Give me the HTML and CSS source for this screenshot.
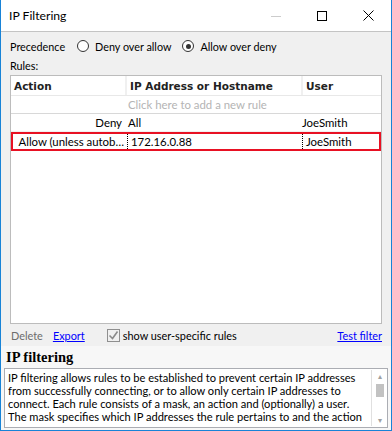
FILE: index.html
```html
<!DOCTYPE html>
<html lang="en">
<head>
  <meta charset="UTF-8" />
  <title>IP Filtering</title>
  <link rel="stylesheet" href="styles.css">
</head>
<body>
  <div class="window">
    <!-- Title bar -->
    <div class="titlebar">
      <span class="title">IP Filtering</span>
      <div class="controls">
        <span class="ctl"><svg width="10" height="10" viewBox="0 0 10 10"><path d="M0 5.5h10" stroke="#ccc" stroke-width="1"/></svg></span>
        <span class="ctl"><svg width="10" height="10" viewBox="0 0 10 10"><rect x="0.5" y="0.5" width="9" height="9" fill="none" stroke="#000"/></svg></span>
        <span class="ctl"><svg width="11" height="11" viewBox="0 0 11 11"><path d="M0.5 0.5l10 10M10.5 0.5l-10 10" stroke="#000" stroke-width="1"/></svg></span>
      </div>
    </div>

    <div class="body">
      <div class="precedence">
        <span>Precedence</span>
        <label class="radio"><span class="dot"></span>Deny over allow</label>
        <label class="radio checked"><span class="dot"></span>Allow over deny</label>
      </div>

      <div class="rules-label">Rules:</div>

      <div class="grid">
        <div class="row head">
          <div class="cell c1">Action</div>
          <div class="cell c2">IP Address or Hostname</div>
          <div class="cell c3">User</div>
        </div>
        <div class="row new">
          <div class="cell c1"></div>
          <div class="cell c2">Click here to add a new rule</div>
          <div class="cell c3"></div>
        </div>
        <div class="row">
          <div class="cell c1 right">Deny</div>
          <div class="cell c2">All</div>
          <div class="cell c3">JoeSmith</div>
        </div>
        <div class="row selected">
          <div class="cell c1 right">Allow (unless autob…</div>
          <div class="cell c2 focus">172.16.0.88</div>
          <div class="cell c3 focus">JoeSmith</div>
        </div>
      </div>

      <div class="actions">
        <span class="disabled">Delete</span>
        <a class="link" href="#">Export</a>
        <label class="check"><span class="box"><svg width="11" height="11" viewBox="0 0 11 11"><path d="M1.5 5.5l3 3 5-7" fill="none" stroke="#8a8a8a" stroke-width="1.6"/></svg></span>show user-specific rules</label>
        <a class="link test" href="#">Test filter</a>
      </div>
    </div>

    <div class="help">
      <div class="help-title">IP filtering</div>
      <div class="help-box">
        <div class="help-text">IP filtering allows rules to be established to prevent certain IP addresses from successfully connecting, or to allow only certain IP addresses to connect. Each rule consists of a mask, an action and (optionally) a user. The mask specifies which IP addresses the rule pertains to and the action</div>
        <div class="scrollbar">
          <span class="arrow">▴</span>
          <span class="thumb"></span>
          <span class="arrow down">▾</span>
        </div>
      </div>
    </div>
  </div>
</body>
</html>
```

FILE: styles.css
```css
html, body {
  margin: 0;
  padding: 0;
}

body {
  font-family: Lato, "Open Sans", sans-serif;
  font-size: 11.4px;
  color: #000;
}

.window {
  width: 392px;
  height: 431px;
  box-sizing: border-box;
  border: 1px solid #1883d7;
  border-top: none;
  background: #f0f0f0;
  display: flex;
  flex-direction: column;
  overflow: hidden;
}

/* Title bar */
.titlebar {
  height: 31px;
  background: #fff;
  border-bottom: 1px solid #c4c4c4;
  display: flex;
  align-items: center;
  justify-content: space-between;
  flex-shrink: 0;
}

.title {
  font-size: 12.2px;
  padding-left: 8px;
}

.controls {
  display: flex;
  height: 100%;
}

.ctl {
  width: 46px;
  display: flex;
  align-items: center;
  justify-content: center;
}

/* Main area */
.body {
  flex: 1;
  display: flex;
  flex-direction: column;
  padding: 0 9px 0 9px;
}

.precedence {
  display: flex;
  align-items: center;
  height: 26px;
  margin-top: 1px;
  font-size: 10.8px;
}

.radio {
  display: flex;
  align-items: center;
  margin-left: 12px;
}

.radio + .radio {
  margin-left: 11px;
}

.dot {
  width: 12px;
  height: 12px;
  box-sizing: border-box;
  border: 1px solid #333;
  border-radius: 50%;
  background: #fff;
  margin-right: 6px;
  position: relative;
}

.radio.checked .dot::after {
  content: "";
  position: absolute;
  left: 2.5px;
  top: 2.5px;
  width: 5px;
  height: 5px;
  border-radius: 50%;
  background: #333;
}

.rules-label {
  height: 16px;
  line-height: 14px;
  font-size: 10.8px;
}

/* Grid */
.grid {
  height: 247px;
  background: #fff;
  border: 1px solid #bcbcbc;
}

.row {
  display: flex;
  height: 17px;
  align-items: stretch;
  border-bottom: 1px solid #f0f0f0;
}

.cell {
  display: flex;
  align-items: center;
  padding: 0 3px;
  white-space: nowrap;
  overflow: hidden;
}

.c1 { width: 108px; }
.c2 { width: 168px; }
.c3 { flex: 1; }

.head {
  height: 19px;
  border-bottom: 1px solid #e8e8e8;
  font-family: "DejaVu Sans", sans-serif;
  font-weight: bold;
  font-size: 10.5px;
  color: #222;
}

.head .cell {
  border-right: 2px solid #f0f0f0;
}

.head .c3 {
  border-right: none;
}

.new {
  color: #b4b4b4;
  border-bottom: 1px solid #d8d8d8;
}

.right {
  justify-content: flex-end;
}

.selected {
  border: 2px solid #e81123;
  height: 15px;
}

.focus {
  border-left: 1px dotted #000;
}

/* Bottom bar */
.actions {
  display: flex;
  align-items: center;
  height: 22px;
  padding: 0 0 0 1px;
  font-size: 10.9px;
}

.disabled {
  color: #6d6d6d;
}

.link {
  color: #0000ff;
  text-decoration: underline;
  margin-left: 10px;
}

.check {
  display: flex;
  align-items: center;
  margin-left: 22px;
}

.box {
  width: 11px;
  height: 11px;
  border: 1px solid #8f8f8f;
  background: #f0f0f0;
  margin-right: 3px;
  display: flex;
}

.test {
  margin-left: auto;
}

/* Help panel */
.help {
  background: #f7f7f7;
  padding: 3px 3px 4px 3px;
  flex-shrink: 0;
}

.help-title {
  font-family: "Liberation Serif", serif;
  font-weight: bold;
  font-size: 14.5px;
  height: 19px;
  padding-left: 2px;
}

.help-box {
  display: flex;
  height: 58px;
  border: 1px solid #abadb3;
  background: #fff;
}

.help-text {
  flex: 1;
  height: 52px;
  margin-top: 2px;
  padding: 0 3px;
  font-size: 11.1px;
  line-height: 13px;
  overflow: hidden;
}

.scrollbar {
  width: 15px;
  border-left: 1px solid #e0e0e0;
  display: flex;
  flex-direction: column;
  align-items: center;
  background: #fff;
  margin: 1px 0;
}

.arrow {
  font-size: 8px;
  color: #a0a0a0;
  height: 12px;
  line-height: 12px;
}

.thumb {
  width: 8px;
  height: 13px;
  background: #c2c2c2;
  margin-top: 2px;
}

.down {
  margin-top: auto;
}
```
